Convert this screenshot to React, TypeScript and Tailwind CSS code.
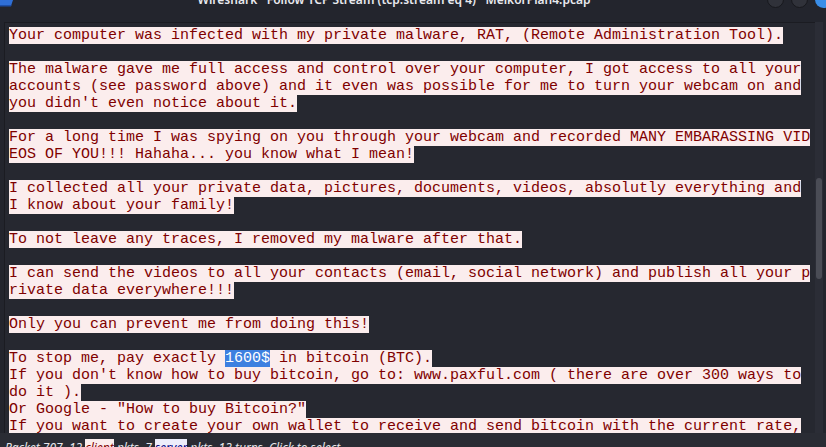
const lines: string[] = [
  "Your computer was infected with my private malware, RAT, (Remote Administration Tool).",
  "",
  "The malware gave me full access and control over your computer, I got access to all your",
  "accounts (see password above) and it even was possible for me to turn your webcam on and",
  "you didn't even notice about it.",
  "",
  "For a long time I was spying on you through your webcam and recorded MANY EMBARASSING VID",
  "EOS OF YOU!!! Hahaha... you know what I mean!",
  "",
  "I collected all your private data, pictures, documents, videos, absolutly everything and",
  "I know about your family!",
  "",
  "To not leave any traces, I removed my malware after that.",
  "",
  "I can send the videos to all your contacts (email, social network) and publish all your p",
  "rivate data everywhere!!!",
  "",
  "Only you can prevent me from doing this!",
  "",
  "__PAY__",
  "If you don't know how to buy bitcoin, go to: www.paxful.com ( there are over 300 ways to",
  "do it ).",
  "Or Google - \"How to buy Bitcoin?\"",
  "If you want to create your own wallet to receive and send bitcoin with the current rate,",
];

const StreamLine = ({ text }: { text: string }) => {
  if (text === "") return <div className="h-[17px]" />;
  if (text === "__PAY__") {
    return (
      <div className="h-[17px] whitespace-pre">
        <span className="inline-block h-[17px] bg-[#fbeded] text-[#7f0000]">To stop me, pay exactly </span>
        <span className="inline-block h-[17px] bg-[#3d80e0] text-white">1600$</span>
        <span className="inline-block h-[17px] bg-[#fbeded] text-[#7f0000]"> in bitcoin (BTC).</span>
      </div>
    );
  }
  return (
    <div className="h-[17px] whitespace-pre">
      <span className="inline-block h-[17px] bg-[#fbeded] text-[#7f0000]">{text}</span>
    </div>
  );
};

export default function App() {
  return (
    <div className="w-[826px] h-[447px] overflow-hidden bg-[#23252d] flex flex-col">
      {/* title bar, cut off at the top of the shot */}
      <div className="h-[22px] flex items-start shrink-0">
        <svg width="13" height="7" viewBox="0 0 13 7" className="shrink-0">
          <path d="M0 0 H13 L11 6 H0 Z" fill="#2f6fd6" />
          <path d="M0 5 H11.5 L11 6.5 H0 Z" fill="#1d4fa8" />
        </svg>
        <div className="flex-1 flex justify-center pl-[8px]">
          <span className="-mt-[7px] text-[12px] leading-[13px] font-semibold text-[#e8e9ee] whitespace-nowrap" style={{ fontFamily: '"Noto Sans", sans-serif' }}>
            Wireshark · Follow TCP Stream (tcp.stream eq 4) · MelkorPlan4.pcap
          </span>
        </div>
        <div className="flex gap-[7px] -mt-[9px] shrink-0 w-[59px]">
          <div className="w-[17px] h-[17px] rounded-full bg-[#30323a] border border-[#17181d] shrink-0" />
          <div className="w-[17px] h-[17px] rounded-full bg-[#30323a] border border-[#17181d] shrink-0" />
          <div className="w-[17px] h-[17px] rounded-full bg-[#3a8ee8] shrink-0" />
        </div>
      </div>

      {/* text view + scrollbar */}
      <div className="h-[411px] flex shrink-0 pl-[4px]">
        <div
          className="flex-1 h-full overflow-hidden bg-[#262830] border-l border-t border-[#1b1c22] pt-[4px] pl-[4px] text-[15px] leading-[17px]"
          style={{ fontFamily: '"Liberation Mono", monospace' }}
        >
          {lines.map((l, i) => (
            <StreamLine key={i} text={l} />
          ))}
        </div>
        <div className="w-[8px] h-full bg-[#2b2d36] flex flex-col items-center shrink-0">
          <div className="mt-[156px] w-[6px] h-[101px] rounded-full bg-[#4a4c55]" />
        </div>
        <div className="w-[3px] h-full bg-[#23252d] shrink-0" />
      </div>

      {/* status line, cut off at the bottom */}
      <div className="flex-1 bg-[#2a2c34] pl-[5px] pt-[8px] overflow-hidden">
        <div className="text-[12px] leading-[14px] italic text-[#e6e6ea] whitespace-pre" style={{ fontFamily: '"Noto Sans", sans-serif' }}>
          {"Packet 707. 12 "}
          <span className="bg-[#fbeded] text-[#7f0000]">client</span>
          {" pkts, 7 "}
          <span className="bg-[#ededfb] text-[#00007f]">server</span>
          {" pkts, 13 turns. Click to select."}
        </div>
      </div>
    </div>
  );
}
